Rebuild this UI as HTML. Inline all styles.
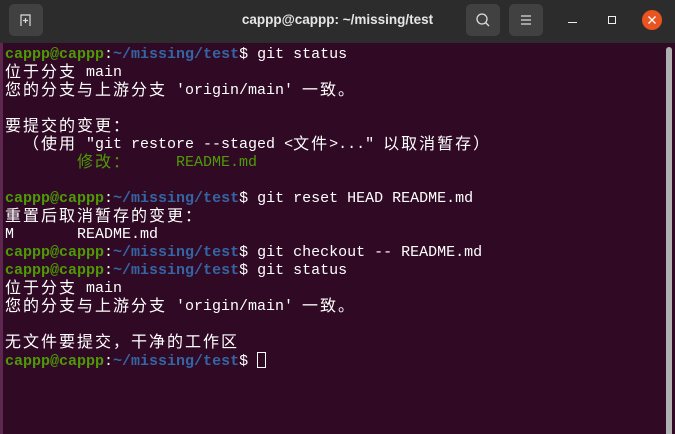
<!DOCTYPE html><html><head><meta charset="utf-8"><style>
body{margin:0;width:675px;height:434px;overflow:hidden;background:#300a24;position:relative;font-family:"Liberation Sans",sans-serif}
.tb{position:absolute;left:0;top:0;width:675px;height:43px;background:#2c2c2c}
.btn{position:absolute;top:4px;width:34px;height:32px;background:#414141;border-radius:5px}
.title{position:absolute;left:0;width:675px;top:12px;text-align:center;color:#e6e6e6;font-weight:bold;font-size:13.5px}
.strip{position:absolute;left:0;top:43px;width:3px;height:391px;background:#5e2750}
pre{position:absolute;left:5px;top:46px;margin:0;font-family:"Liberation Mono","Noto Sans CJK SC",monospace;font-size:15px;line-height:18px;color:#fff}
pre>div{height:18px;overflow:visible;white-space:pre}
.c{letter-spacing:2px;font-size:16px;line-height:18px;display:inline-block;height:18px;vertical-align:top}
.g{color:#4e9a06;font-weight:bold}.b{color:#3465a4;font-weight:bold}.gn{color:#4e9a06}
.sb{position:absolute;left:666px;top:47px;width:6px;height:387px;background:#b0b0b0;border-radius:3px 3px 0 0}
.cur{display:inline-block;width:9px;height:16px;border:1px solid #fff;vertical-align:-3px;box-sizing:border-box}
</style></head><body>
<div class="tb">
<div class="btn" style="left:9px"><svg width="34" height="32"><path d="M12 22V11h9v11" fill="none" stroke="#ddd" stroke-width="1.2"/><path d="M16.5 14v5M14 16.5h5" stroke="#ddd" stroke-width="1.2"/></svg></div>
<div class="title">cappp@cappp: ~/missing/test</div>
<div class="btn" style="left:466px"><svg width="34" height="32"><circle cx="16" cy="15" r="5" fill="none" stroke="#ddd" stroke-width="1.3"/><path d="M19.5 18.5l3.5 3.5" stroke="#ddd" stroke-width="1.3"/></svg></div>
<div class="btn" style="left:509px"><svg width="34" height="32"><path d="M12 12h10M12 16h10M12 20h10" stroke="#ddd" stroke-width="1.2"/></svg></div>
<div style="position:absolute;left:568px;top:22px;width:9px;height:1px;background:#eee"></div>
<div style="position:absolute;left:608px;top:16px;width:6px;height:6px;border:1px solid #eee"></div>
<div style="position:absolute;left:642px;top:10px;width:20px;height:20px;border-radius:50%;background:#e95420"><svg width="20" height="20"><path d="M6.5 6.5l7 7M13.5 6.5l-7 7" stroke="#fff" stroke-width="1.3"/></svg></div>
</div>
<div class="strip"></div>
<div class="sb"></div>
<pre><div><span class="g">cappp@cappp</span>:<span class="b">~/missing/test</span>$ git status</div><div><span class="c">位于分支</span> main</div><div><span class="c">您的分支与上游分支</span> 'origin/main' <span class="c">一致。</span></div><div></div><div><span class="c">要提交的变更：</span></div><div>  <span class="c">（使用</span> "git restore --staged &lt;<span class="c">文件</span>&gt;..." <span class="c">以取消暂存）</span></div><div>	<span class="gn"><span class="c">修改：</span>     README.md</span></div><div></div><div><span class="g">cappp@cappp</span>:<span class="b">~/missing/test</span>$ git reset HEAD README.md</div><div><span class="c">重置后取消暂存的变更：</span></div><div>M	README.md</div><div><span class="g">cappp@cappp</span>:<span class="b">~/missing/test</span>$ git checkout -- README.md</div><div><span class="g">cappp@cappp</span>:<span class="b">~/missing/test</span>$ git status</div><div><span class="c">位于分支</span> main</div><div><span class="c">您的分支与上游分支</span> 'origin/main' <span class="c">一致。</span></div><div></div><div><span class="c">无文件要提交，干净的工作区</span></div><div><span class="g">cappp@cappp</span>:<span class="b">~/missing/test</span>$ <span class="cur"></span></div></pre>
</body></html>
